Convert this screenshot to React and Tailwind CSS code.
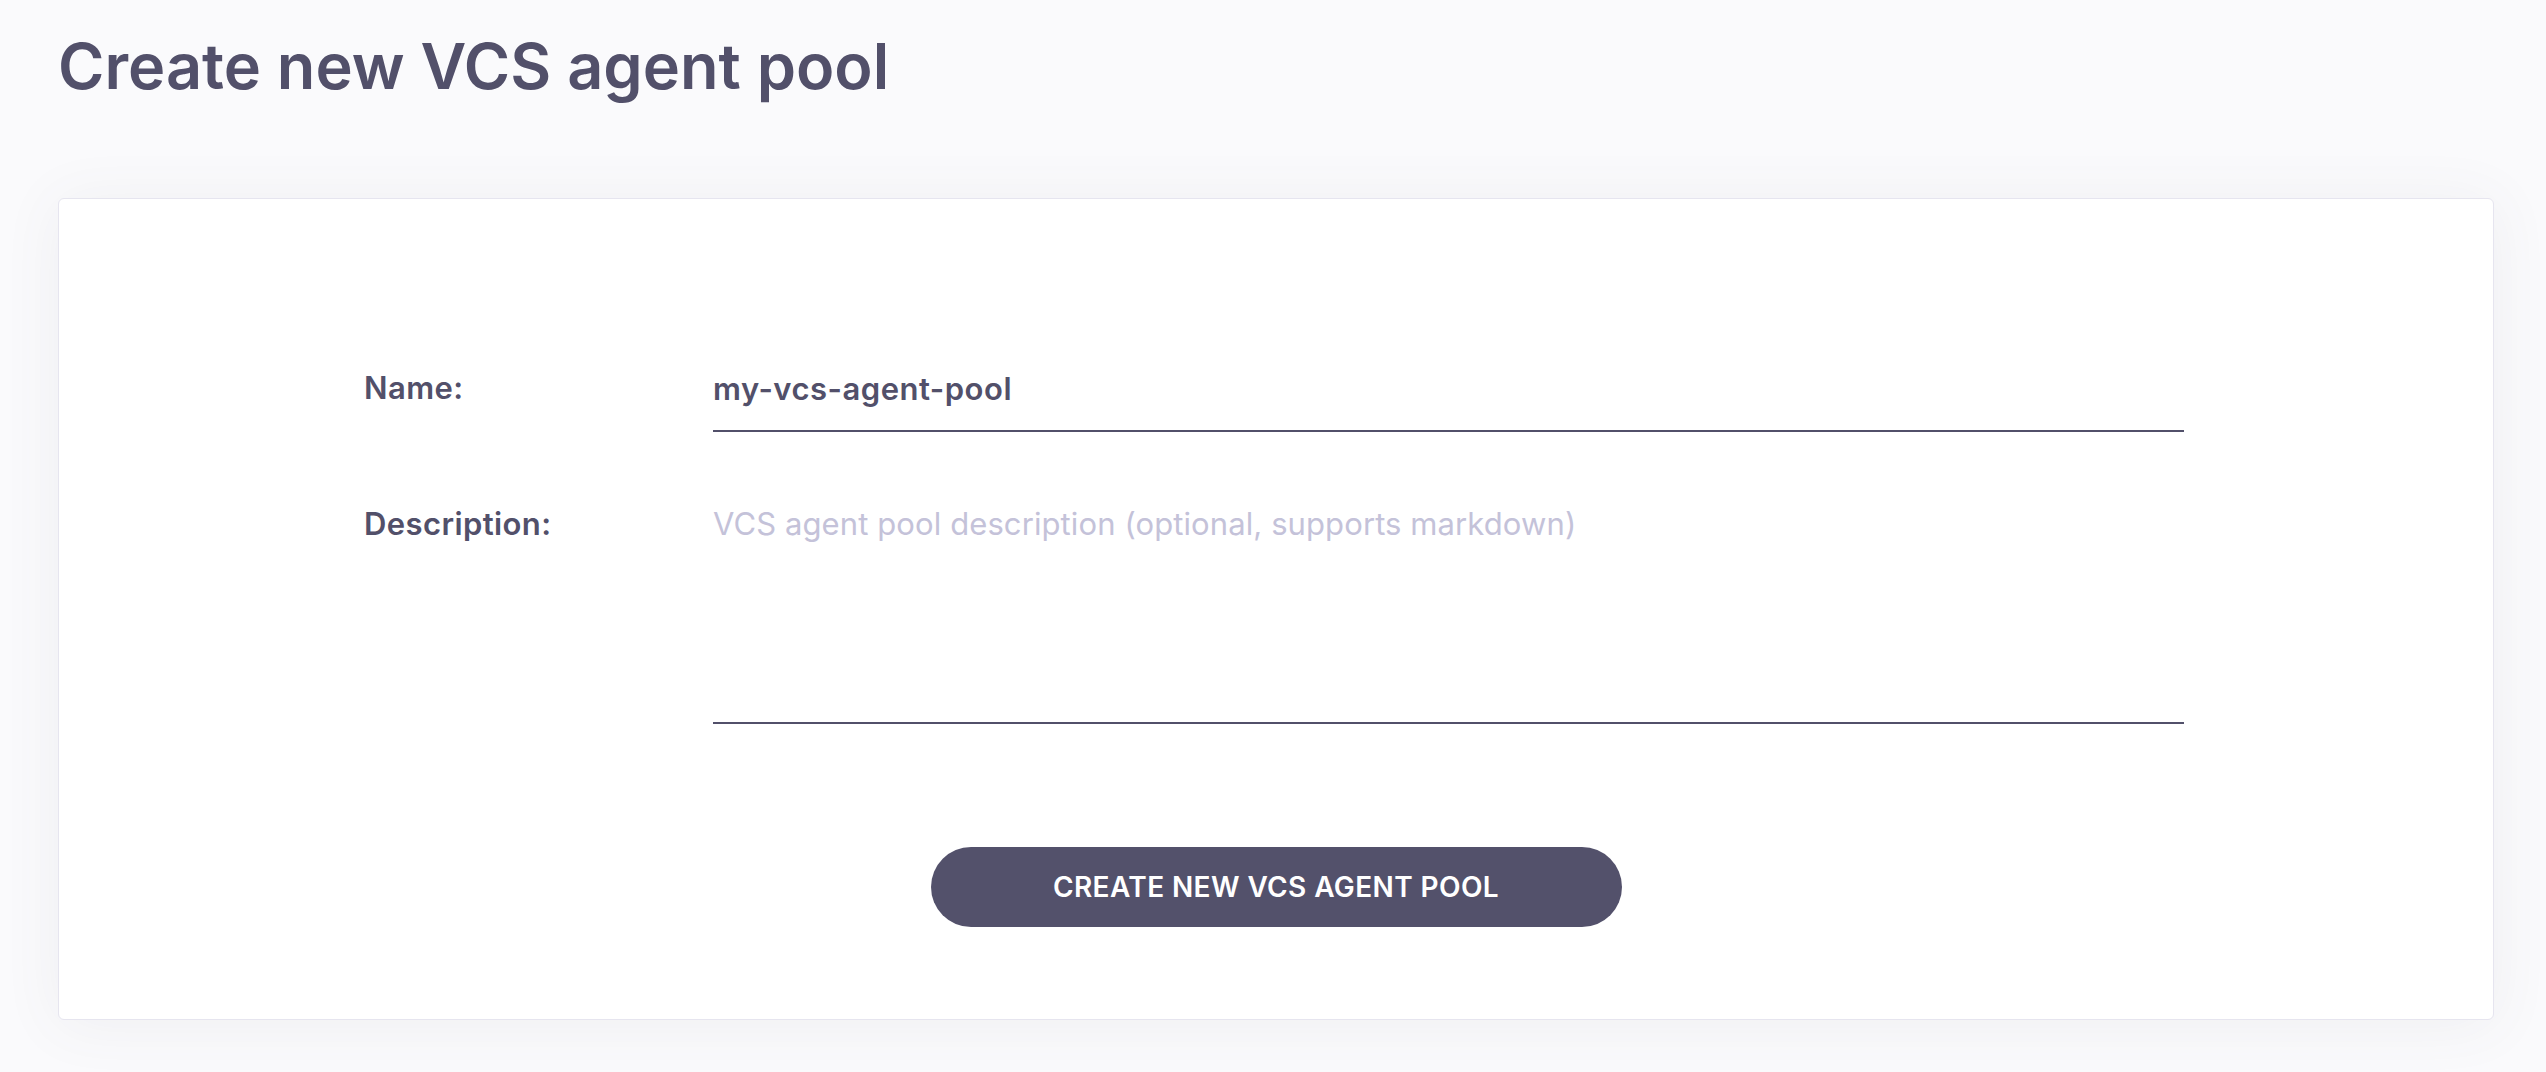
export default function App() {
  return (
    <div
      className="min-h-screen bg-[#fafafc] pl-[58px] pr-[52px] pt-[35px] pb-[40px] text-[#52506a]"
      style={{ fontFamily: 'Inter, "Noto Sans", sans-serif' }}
    >
      <h1 className="text-[63px] leading-none font-semibold tracking-[0px] m-0">
        Create new VCS agent pool
      </h1>
      <div className="mt-[100px] bg-white border border-[#e6e5ef] rounded-md shadow-[0_4px_60px_rgba(82,80,106,0.07)] pt-[169px] pb-[92px]">
        <div className="pl-[305px] w-[2125px]">
          <div className="grid grid-cols-[349px_1fr]">
            <label className="text-[31px] leading-[40px] font-semibold tracking-[0.4px]">Name:</label>
            <input
              defaultValue="my-vcs-agent-pool"
              className="block w-full bg-transparent outline-none text-[31px] leading-[40px] h-[64px] pb-[22px] font-semibold tracking-[0.5px] text-[#52506a] border-b-2 border-[#52506a]"
            />
          </div>
          <div className="grid grid-cols-[349px_1fr] mt-[72px]">
            <label className="text-[31px] leading-[40px] font-semibold tracking-[0.4px]">Description:</label>
            <textarea
              placeholder="VCS agent pool description (optional, supports markdown)"
              className="block w-full resize-none bg-transparent outline-none text-[31px] leading-[40px] h-[220px] p-0 tracking-[0.1px] text-[#52506a] placeholder:text-[#c4c2d9] border-b-2 border-[#52506a]"
            />
          </div>
        </div>
        <div className="flex justify-center mt-[123px]">
          <button className="w-[691px] h-[80px] rounded-full bg-[#53516b] text-white text-[28px] font-semibold tracking-[0.4px] uppercase">
            Create new VCS agent pool
          </button>
        </div>
      </div>
    </div>
  );
}
